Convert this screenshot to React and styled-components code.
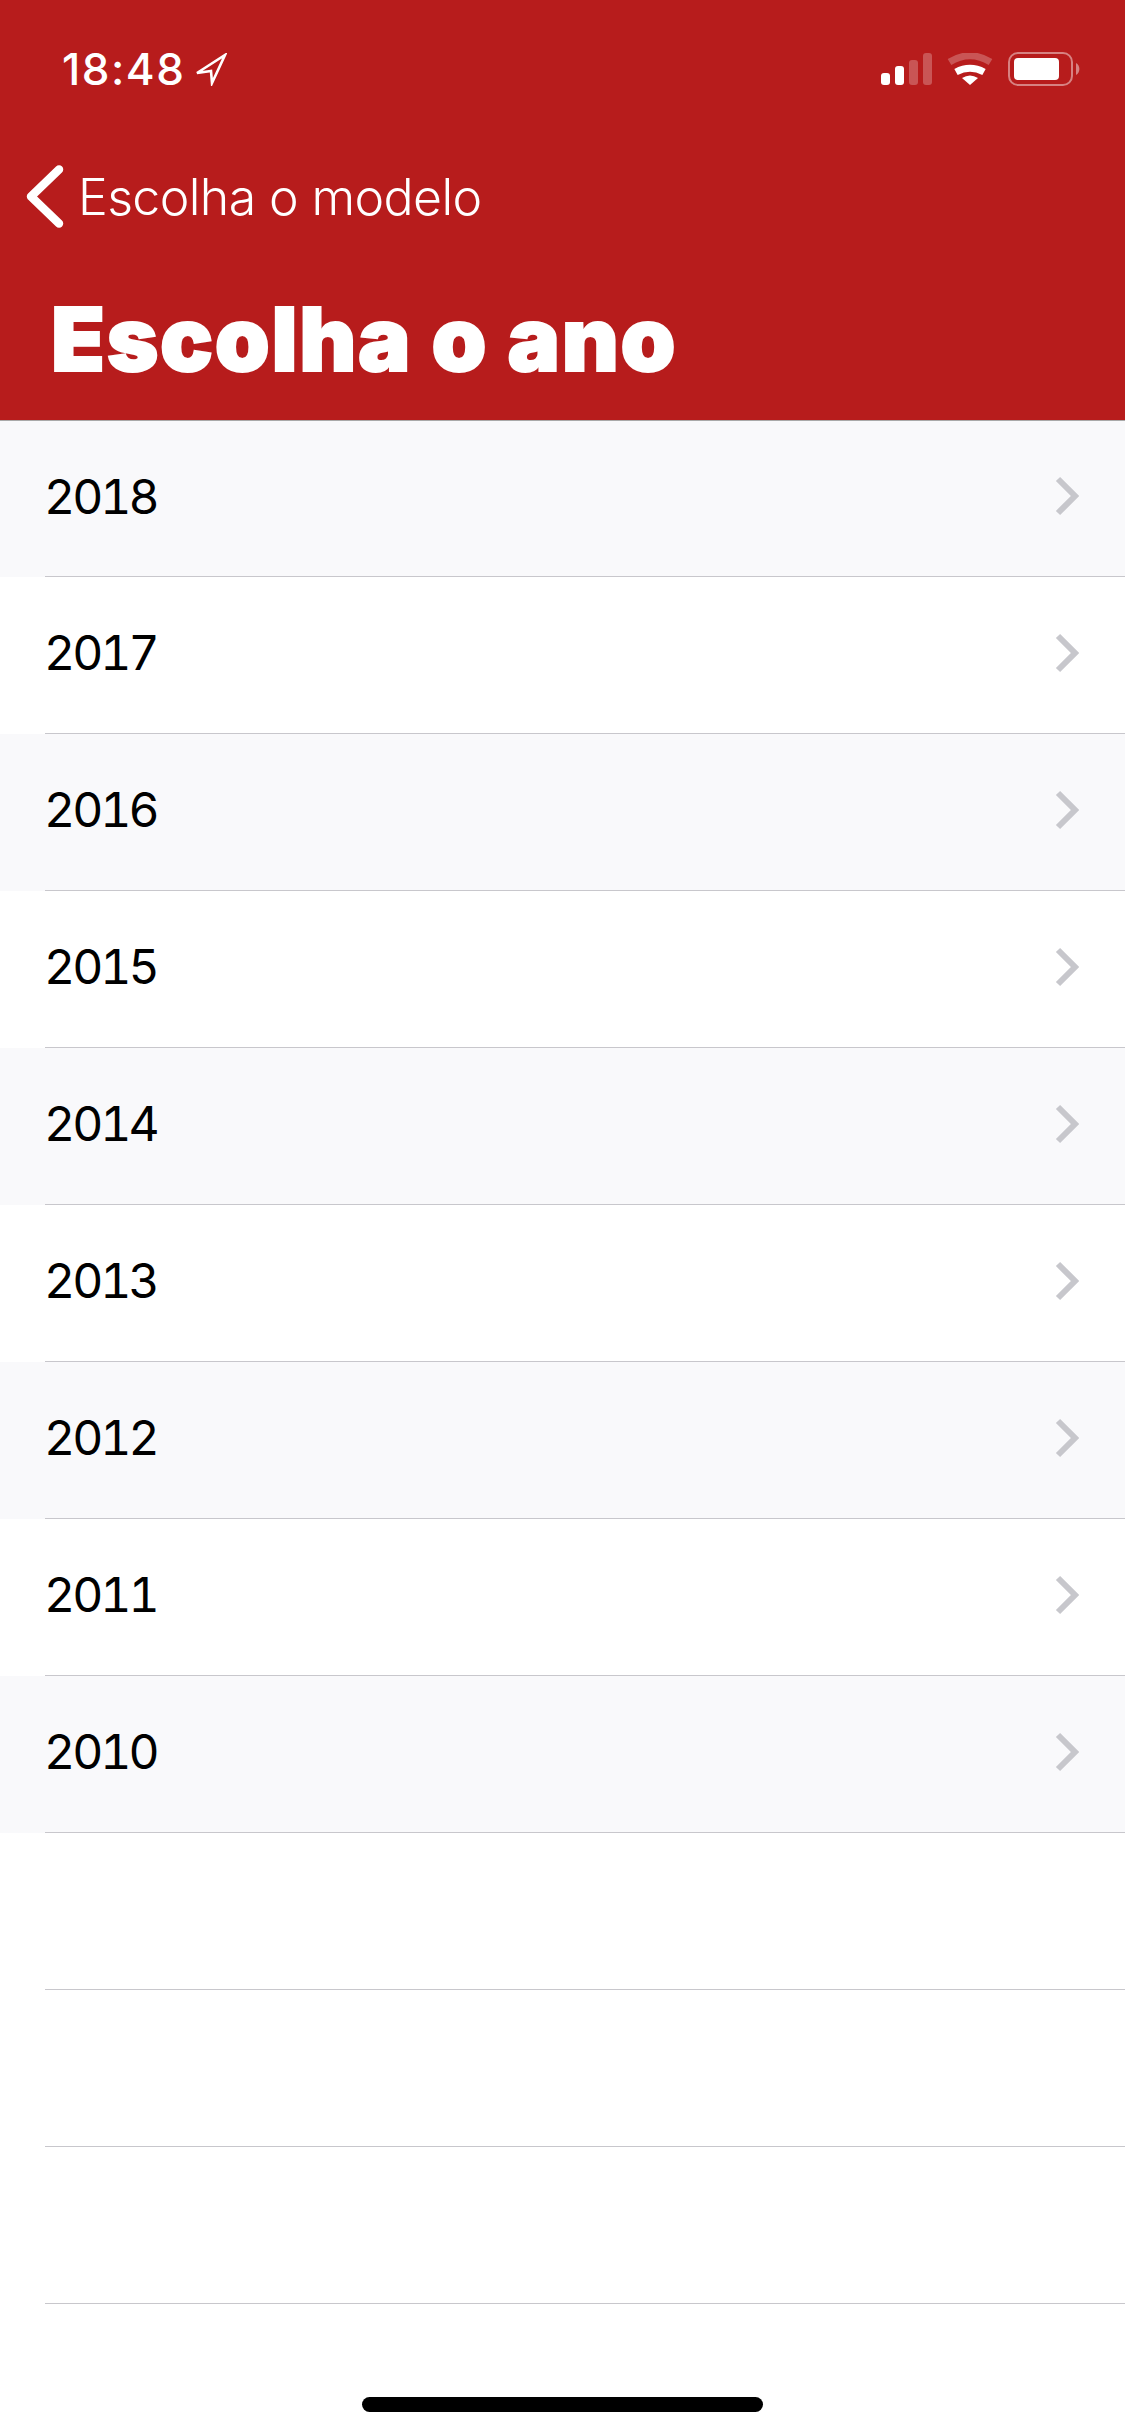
import React from "react";
import styled, { createGlobalStyle } from "styled-components";

const years = [2018, 2017, 2016, 2015, 2014, 2013, 2012, 2011, 2010];
const EMPTY_ROWS = 3;

const GlobalStyle = createGlobalStyle`
  html, body {
    margin: 0;
    padding: 0;
    background: #fff;
  }
  body {
    font-family: Inter, "Liberation Sans", sans-serif;
  }
`;

const Screen = styled.div`
  position: relative;
  width: 1125px;
  height: 2436px;
  overflow: hidden;
  background: #fff;
`;

const Header = styled.header`
  height: 421px;
  box-sizing: border-box;
  background: #b71c1c;
  color: #fff;
  border-bottom: 1px solid #a9a9a9;
  display: flex;
  flex-direction: column;
`;

const StatusBar = styled.div`
  display: flex;
  align-items: center;
  justify-content: space-between;
  height: 64px;
  margin-top: 37px;
  padding: 0 44px 0 62px;
`;

const Clock = styled.div`
  display: flex;
  align-items: center;
  gap: 10px;
  font-size: 44px;
  font-weight: 500;
  letter-spacing: 1.5px;
`;

const StatusIcons = styled.div`
  display: flex;
  align-items: center;
  gap: 15px;
`;

const NavRow = styled.div`
  display: flex;
  align-items: center;
  gap: 14px;
  margin-top: 64px;
  padding-left: 26px;
  font-size: 50px;
  font-weight: 300;
  letter-spacing: -0.6px;
`;

const Title = styled.h1`
  margin: 61px 0 0;
  padding-left: 51px;
  font-size: 88px;
  font-weight: 900;
  line-height: 100px;
  letter-spacing: 1.7px;
  -webkit-text-stroke: 2px #fff;
`;

const List = styled.div`
  display: flex;
  flex-direction: column;
`;

const Row = styled.div`
  height: 157px;
  box-sizing: border-box;
  background: ${(p) => (p.$shaded ? "#f9f9fb" : "#fff")};

  &:first-child {
    height: 156px;
  }
`;

const RowInner = styled.div`
  height: 100%;
  box-sizing: border-box;
  margin-left: 45px;
  padding: 0 46px 5px 0;
  border-bottom: 1px solid #c8c7cc;
  display: flex;
  align-items: center;
  justify-content: space-between;
  font-size: 48px;
  font-variant-numeric: tabular-nums;
  letter-spacing: -3px;
  text-indent: -1px;
  color: #000;
`;

const HomeBar = styled.div`
  position: absolute;
  left: 362px;
  top: 2397px;
  width: 401px;
  height: 15px;
  border-radius: 8px;
  background: #000;
`;

const Arrow = () => (
  <svg width="32" height="33" viewBox="0 0 32 33">
    <path d="M2 20 L30 2 L17 30 L16 18 Z" fill="none" stroke="#fff" strokeWidth="2.6" />
  </svg>
);

const Signal = () => (
  <svg width="51" height="32" viewBox="0 0 51 32" fill="#fff">
    <rect x="0" y="20" width="9" height="12" rx="3" />
    <rect x="14" y="13" width="9" height="19" rx="3" />
    <rect x="28" y="7" width="9" height="25" rx="3" opacity="0.25" />
    <rect x="42" y="0" width="9" height="32" rx="3" opacity="0.25" />
  </svg>
);

const Wifi = () => (
  <svg width="46" height="32" viewBox="0 0 46 32" fill="none" stroke="#fff" strokeWidth="7">
    <path d="M2.5 9 Q23 -3.5 43.5 9" opacity="0.25" />
    <path d="M9 19 Q23 11.5 37 19" />
    <path d="M23 32 L15 25 Q23 20 31 25 Z" fill="#fff" stroke="none" />
  </svg>
);

const Battery = () => (
  <svg width="73" height="34" viewBox="0 0 73 34" fill="#fff">
    <rect x="1" y="1" width="63" height="32" rx="9" fill="none" stroke="#fff" strokeWidth="2" opacity="0.45" />
    <rect x="6" y="6" width="45" height="22" rx="4" />
    <path d="M68 11 A7 7 0 0 1 68 23 Z" opacity="0.45" />
  </svg>
);

const BackChevron = () => (
  <svg width="38" height="63" viewBox="0 0 38 63" fill="none" stroke="#fff" strokeWidth="8.5" strokeLinecap="round" strokeLinejoin="round">
    <path d="M33 4.5 L5 31.5 L33 58.5" />
  </svg>
);

const RowChevron = () => (
  <svg width="24" height="40" viewBox="0 0 24 40" fill="none" stroke="#c7c7cc" strokeWidth="6">
    <path d="M3 3 L20 20 L3 37" />
  </svg>
);

export default function App() {
  return (
    <Screen>
      <GlobalStyle />
      <Header>
        <StatusBar>
          <Clock>
            18:48 <Arrow />
          </Clock>
          <StatusIcons>
            <Signal />
            <Wifi />
            <Battery />
          </StatusIcons>
        </StatusBar>
        <NavRow>
          <BackChevron />
          Escolha o modelo
        </NavRow>
        <Title>Escolha o ano</Title>
      </Header>
      <List>
        {years.map((year, i) => (
          <Row key={year} $shaded={i % 2 === 0}>
            <RowInner>
              {year}
              <RowChevron />
            </RowInner>
          </Row>
        ))}
        {Array.from({ length: EMPTY_ROWS }, (_, i) => (
          <Row key={i}>
            <RowInner />
          </Row>
        ))}
      </List>
      <HomeBar />
    </Screen>
  );
}
